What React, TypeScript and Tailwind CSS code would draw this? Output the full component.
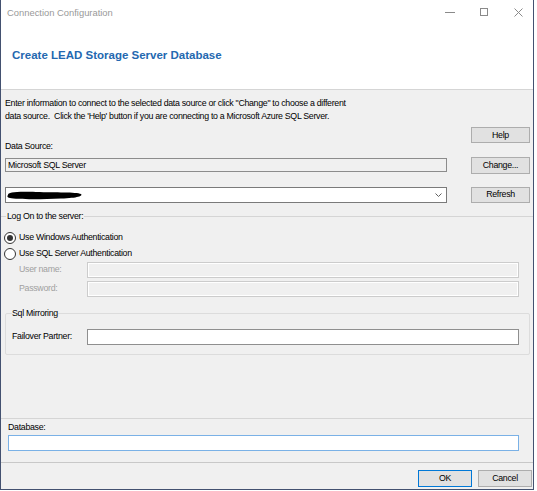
import React from "react";

function Btn({ label, className, primary }: { label: string; className?: string; primary?: boolean }) {
  return (
    <div
      className={
        "h-[17px] flex items-center justify-center bg-[#e1e1e1] border leading-none " +
        (primary ? "border-[#0078d7] " : "border-[#adadad] ") +
        (className ?? "")
      }
    >
      {label}
    </div>
  );
}

function Radio({ checked }: { checked?: boolean }) {
  return (
    <span className="w-[12px] h-[12px] rounded-full border border-[#333333] bg-white flex items-center justify-center shrink-0">
      {checked ? <span className="w-[6px] h-[6px] rounded-full bg-[#333333]" /> : null}
    </span>
  );
}

export default function App() {
  return (
    <div className="w-[537px] h-[491px] bg-white overflow-hidden">
      <div className="w-[534px] h-[490px] flex flex-col border-l border-r border-b border-[#435170] bg-[#f0f0f0] text-black font-['Liberation_Sans',Arial,sans-serif] text-[8.8px] tracking-[-0.3px]">
        {/* title bar */}
        <div className="h-[24px] shrink-0 bg-white flex items-center">
          <span className="pl-[6px] pt-[2px] text-[9.4px] tracking-normal text-[#999999]">Connection Configuration</span>
          <div className="ml-auto flex items-center pr-[10px]">
            <svg width="10" height="10" viewBox="0 0 10 10">
              <path d="M0 5.5H10" stroke="#8a8a8a" />
            </svg>
            <svg className="ml-[25px]" width="8" height="8" viewBox="0 0 8 8">
              <rect x="0.5" y="0.5" width="7" height="7" fill="none" stroke="#8a8a8a" />
            </svg>
            <svg className="ml-[26px]" width="9" height="9" viewBox="0 0 9 9">
              <path d="M0.5 0.5L8.5 8.5M8.5 0.5L0.5 8.5" stroke="#8a8a8a" />
            </svg>
          </div>
        </div>

        {/* header */}
        <div className="h-[66px] shrink-0 bg-white border-b border-[#d5d5d5] pl-[11px] pt-[25px]">
          <div className="font-bold text-[11.5px] tracking-normal leading-[13px] text-[#2468b0] whitespace-nowrap">
            Create LEAD Storage Server Database
          </div>
        </div>

        {/* intro */}
        <div className="pl-[4px] mt-[7px] leading-[13px] whitespace-nowrap">
          Enter information to connect to the selected data source or click "Change" to choose a different
          <br />
          data source.&nbsp; Click the 'Help' button if you are connecting to a Microsoft Azure SQL Server.
        </div>

        {/* data source */}
        <div className="flex pl-[4px] h-[80px] shrink-0">
          <div className="w-[442px] flex flex-col">
            <div className="mt-[17px] h-[12px] leading-[12px]">Data Source:</div>
            <div className="mt-[6px] h-[14px] border border-[#8c8c8c] bg-[#f0f0f0] flex items-center pl-[2px] leading-none">
              Microsoft SQL Server
            </div>
            <div className="mt-[15px] h-[16px] border border-[#7a7a7a] bg-white flex items-center">
              <svg width="77" height="9" viewBox="0 0 77 9">
                <path
                  d="M2 4 C 2 1, 10 0.5, 30 1 C 50 1.5, 70 1, 75 3 C 77 5, 72 7, 55 7.5 C 35 8.5, 10 8.5, 4 7 C 1 6.5, 1 5, 2 4 Z"
                  fill="#000"
                />
              </svg>
              <svg className="ml-auto mr-[4px]" width="7" height="4" viewBox="0 0 7 4">
                <path d="M0.5 0.5L3.5 3.5L6.5 0.5" stroke="#606060" fill="none" />
              </svg>
            </div>
          </div>
          <div className="ml-[24px] w-[59px] flex flex-col">
            <Btn label="Help" className="mt-[4px] h-[16px]" />
            <Btn label="Change..." className="mt-[14px] h-[16px]" />
            <Btn label="Refresh" className="mt-[13px] h-[16px]" />
          </div>
        </div>

        {/* log on group line */}
        <div className="mt-[7px] h-[12px] flex items-center shrink-0">
          <div className="w-[5px] h-px bg-[#d5d5d5]" />
          <span className="px-[1px] leading-[12px]">Log On to the server:</span>
          <div className="flex-1 h-px bg-[#d5d5d5]" />
        </div>

        <div className="mt-[9px] h-[13px] flex items-center pl-[3px] shrink-0">
          <Radio checked />
          <span className="ml-[3px]">Use Windows Authentication</span>
        </div>
        <div className="mt-[3px] h-[13px] flex items-center pl-[3px] shrink-0">
          <Radio />
          <span className="ml-[3px]">Use SQL Server Authentication</span>
        </div>

        <div className="mt-[2px] h-[16px] flex items-center pl-[18px] shrink-0">
          <span className="w-[68px] text-[#a0a0a0]">User name:</span>
          <div className="w-[432px] h-[16px] border border-[#cccccc] bg-[#f0f0f0] shadow-[inset_0_0_0_1px_#ffffff]" />
        </div>
        <div className="mt-[3px] h-[16px] flex items-center pl-[18px] shrink-0">
          <span className="w-[68px] text-[#a0a0a0]">Password:</span>
          <div className="w-[432px] h-[16px] border border-[#cccccc] bg-[#f0f0f0] shadow-[inset_0_0_0_1px_#ffffff]" />
        </div>

        <fieldset className="mt-[10px] ml-[4px] w-[525px] border border-[#dcdcdc] rounded-[2px] pl-[6px] pb-[9px] shrink-0">
          <legend className="leading-[12px] h-[12px]">Sql Mirroring</legend>
          <div className="mt-[10px] h-[16px] flex items-center">
            <span className="w-[75px]">Failover Partner:</span>
            <div className="w-[432px] h-[16px] border border-[#8f8f8f] bg-white" />
          </div>
        </fieldset>

        <div className="flex-1" />

        {/* database */}
        <div className="shrink-0 h-[44px] border-t border-[#d5d5d5] pl-[7px]">
          <div className="mt-[2px] leading-[12px] h-[12px]">Database:</div>
          <div className="mt-[2px] w-[511px] h-[16px] border border-[#7ab1e6] bg-white" />
        </div>

        {/* buttons */}
        <div className="shrink-0 h-[27px] border-t border-[#c8c8c8] flex justify-end items-start pt-[7px] pr-[1px] gap-[6px]">
          <Btn label="OK" primary className="w-[54px]" />
          <Btn label="Cancel" className="w-[54px]" />
        </div>
      </div>
    </div>
  );
}
